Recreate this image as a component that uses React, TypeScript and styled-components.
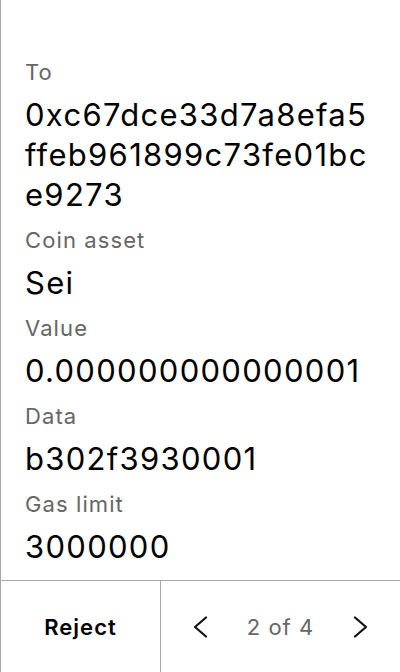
import React from "react";
import styled, { createGlobalStyle } from "styled-components";

const GlobalStyle = createGlobalStyle`
  html, body {
    margin: 0;
    padding: 0;
    background: #ffffff;
  }
  * {
    box-sizing: border-box;
  }
`;

interface Field {
  label: string;
  value: string;
}

const fields: Field[] = [
  { label: "To", value: "0xc67dce33d7a8efa5ffeb961899c73fe01bce9273" },
  { label: "Coin asset", value: "Sei" },
  { label: "Value", value: "0.000000000000001" },
  { label: "Data", value: "b302f3930001" },
  { label: "Gas limit", value: "3000000" },
];

const Chevron: React.FC<{ dir: "left" | "right" }> = ({ dir }) => (
  <svg width="16" height="22" viewBox="0 0 16 22" fill="none">
    <path
      d={dir === "left" ? "M14 1.5 L3 11 L14 20.5" : "M2 1.5 L13 11 L2 20.5"}
      stroke="#111"
      strokeWidth="2.2"
      strokeLinecap="round"
      strokeLinejoin="round"
    />
  </svg>
);

export default function App() {
  return (
    <>
      <GlobalStyle />
      <Screen>
        <Details>
          {fields.map((f) => (
            <Item key={f.label}>
              <Label>{f.label}</Label>
              <Value>{f.value}</Value>
            </Item>
          ))}
        </Details>
        <Footer>
          <RejectButton>Reject</RejectButton>
          <Pager>
            <NavButton aria-label="Previous">
              <Chevron dir="left" />
            </NavButton>
            <PageText>2 of 4</PageText>
            <NavButton aria-label="Next">
              <Chevron dir="right" />
            </NavButton>
          </Pager>
        </Footer>
      </Screen>
    </>
  );
}

// Styled components
const Screen = styled.div`
  width: 400px;
  height: 672px;
  display: flex;
  flex-direction: column;
  border-left: 1px solid #a9a9a9;
  font-family: Inter, "Noto Sans", sans-serif;
  color: #000;
  overflow: hidden;
`;

const Details = styled.div`
  flex: 1;
  display: flex;
  flex-direction: column;
  gap: 11px;
  padding: 58px 28px 0 24px;
  overflow: hidden;
`;

const Item = styled.div`
  display: flex;
  flex-direction: column;
  gap: 9px;
`;

const Label = styled.div`
  font-size: 22px;
  line-height: 28px;
  letter-spacing: 1.1px;
  color: #666;
`;

const Value = styled.div`
  font-size: 31px;
  line-height: 40px;
  letter-spacing: 1.3px;
  color: #000;
  word-break: break-all;
`;

const Footer = styled.div`
  height: 92px;
  flex-shrink: 0;
  display: flex;
  border-top: 1px solid #a9a9a9;
`;

const RejectButton = styled.button`
  width: 160px;
  border: none;
  border-right: 1px solid #a9a9a9;
  background: none;
  padding: 0;
  font-family: inherit;
  font-size: 22px;
  font-weight: 600;
  letter-spacing: 1px;
  color: #000;
  cursor: pointer;
`;

const Pager = styled.div`
  flex: 1;
  display: flex;
  align-items: center;
  justify-content: space-between;
  padding: 0 27px;
`;

const NavButton = styled.button`
  width: 24px;
  height: 40px;
  display: flex;
  align-items: center;
  justify-content: center;
  border: none;
  background: none;
  padding: 0;
  cursor: pointer;
`;

const PageText = styled.span`
  font-size: 22px;
  letter-spacing: 1px;
  color: #666;
`;
